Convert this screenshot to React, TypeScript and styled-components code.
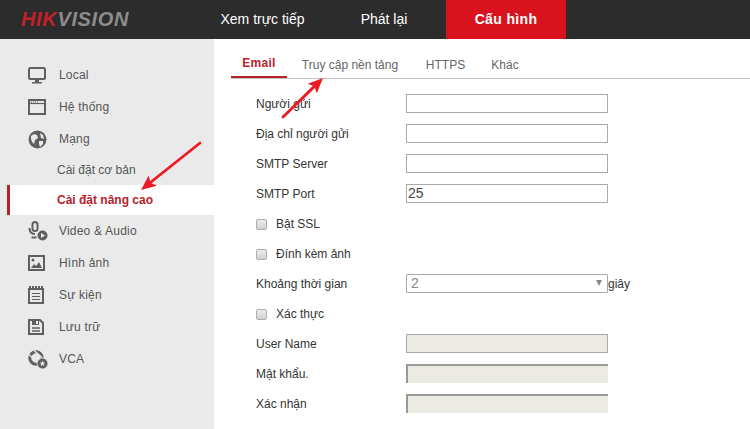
import React from "react";
import styled, { createGlobalStyle } from "styled-components";

const Global = createGlobalStyle`
  html, body { margin: 0; padding: 0; background: #fff; }
  body { font-family: "Liberation Sans", Arial, sans-serif; color: #444; overflow: hidden; }
  * { box-sizing: border-box; }
`;

const Page = styled.div`
  position: relative;
  width: 750px;
  height: 429px;
  overflow: hidden;
  display: flex;
  flex-direction: column;
`;

const Header = styled.header`
  height: 39px;
  background: #2c2c2c;
  display: flex;
  flex: none;
`;

const Logo = styled.div`
  width: 203px;
  padding-left: 21px;
  font: italic bold 20px/38px "Liberation Sans", sans-serif;
  letter-spacing: 0.65px;
  color: #8c8c8c;
  white-space: nowrap;
  span { color: #c4202b; }
`;

const TopNav = styled.nav`
  display: flex;
`;

const TopItem = styled.div<{ $w: number; $active?: boolean }>`
  width: ${(p) => p.$w}px;
  text-align: center;
  font-size: 14px;
  line-height: 39px;
  white-space: nowrap;
  color: #fff;
  font-weight: ${(p) => (p.$active ? 700 : 400)};
  letter-spacing: ${(p) => (p.$active ? "0.35px" : "0")};
  background: ${(p) => (p.$active ? "#d9131e" : "transparent")};
`;

const Body = styled.div`
  flex: 1;
  display: flex;
  min-height: 0;
`;

const Sidebar = styled.aside`
  width: 214px;
  flex: none;
  background: #eaeaea;
  padding: 20px 0 0 7px;
`;

const NavRow = styled.div`
  height: 32px;
  display: flex;
  align-items: center;
  padding-left: 21px;
  font-size: 12px;
  letter-spacing: 0.2px;
  color: #555;
`;

const IconSlot = styled.span`
  width: 31px;
  height: 20px;
  display: flex;
  align-items: center;
  flex: none;
  svg { display: block; color: #5f5f5f; }
`;

const SubRow = styled.div<{ $active?: boolean }>`
  height: 30px;
  display: flex;
  align-items: center;
  padding-left: ${(p) => (p.$active ? 47 : 50)}px;
  font-size: 12px;
  color: ${(p) => (p.$active ? "#b5222c" : "#555")};
  background: ${(p) => (p.$active ? "#fff" : "transparent")};
  border-left: ${(p) => (p.$active ? "3px solid #b5222c" : "none")};
  font-weight: ${(p) => (p.$active ? 700 : 400)};
`;

const Main = styled.main`
  flex: 1;
  padding: 11px 0 0 17px;
`;

const Tabs = styled.div`
  display: flex;
  height: 29px;
  border-bottom: 1px solid #c4c4c4;
`;

const Tab = styled.div<{ $w: number; $active?: boolean }>`
  width: ${(p) => p.$w}px;
  height: 28px;
  text-align: center;
  font-size: 12px;
  line-height: ${(p) => (p.$active ? 27 : 31)}px;
  letter-spacing: ${(p) => (p.$active ? "0.3px" : "0")};
  color: ${(p) => (p.$active ? "#b5222c" : "#666")};
  font-weight: ${(p) => (p.$active ? 700 : 400)};
  border-bottom: ${(p) => (p.$active ? "2px solid #b5222c" : "none")};
`;

const Form = styled.div`
  padding: 9px 0 0 25px;
`;

const Row = styled.div`
  height: 30px;
  display: flex;
  align-items: center;
  font-size: 12px;
  color: #333;
`;

const Label = styled.label`
  width: 150px;
  flex: none;
  padding-top: 2px;
`;

const CheckLabel = styled.label`
  display: flex;
  align-items: center;
  gap: 9px;
  padding-top: 2px;
`;

const Check = styled.span`
  width: 11px;
  height: 11px;
  border: 1px solid #adadad;
  border-radius: 2px;
  background: linear-gradient(#ececec, #d2d2d2);
`;

const Field = styled.div<{ $disabled?: boolean; $inset?: boolean }>`
  width: 202px;
  height: 19px;
  padding-left: 1px;
  font-size: 14px;
  line-height: 17px;
  color: #444;
  border: 1px solid #a9a9a9;
  background: ${(p) => (p.$disabled ? "#ebebe4" : "#fff")};
  ${(p) =>
    p.$inset
      ? "border-width: 2px 0 0 2px; border-color: #9a9a9a; background: #ebebe4;"
      : ""}
`;

const Select = styled.div`
  width: 202px;
  height: 19px;
  display: flex;
  align-items: center;
  justify-content: space-between;
  padding: 0 5px 0 4px;
  font-size: 14px;
  color: #888;
  border: 1px solid #a9a9a9;
  border-radius: 1px;
`;

const Caret = styled.span`
  width: 0;
  height: 0;
  border-left: 3px solid transparent;
  border-right: 3px solid transparent;
  border-top: 6px solid #8a8a8a;
`;

const Unit = styled.span`
  padding-top: 2px;
`;

const ArrowLayer = styled.svg`
  position: absolute;
  left: 0;
  top: 0;
  pointer-events: none;
`;

const Monitor = () => (
  <svg width="18" height="17" viewBox="0 0 18 17"><rect x="1" y="1" width="16" height="11" rx="1.5" fill="none" stroke="currentColor" strokeWidth="2" /><path d="M7 13h4v2h3v1.5H4V15h3z" fill="currentColor" /></svg>
);
const Windowed = () => (
  <svg width="18" height="16" viewBox="0 0 18 16"><rect x="1" y="1" width="16" height="14" fill="none" stroke="currentColor" strokeWidth="2" /><path d="M1 4.5h16" stroke="currentColor" strokeWidth="1.2" /><path d="M3 3h7" stroke="currentColor" strokeWidth="1" strokeDasharray="1 1" /></svg>
);
const Globe = () => (
  <svg width="19" height="19" viewBox="0 0 19 19"><circle cx="9.5" cy="9.5" r="9" fill="currentColor" /><path d="M3 6l3-2 3 1 1 3-3 2-1 4-2-2-1-3zM11 11l4 0 0 3-3 3-1-3zM12 3l3 2 1 4-3-1z" fill="#eaeaea" /></svg>
);
const Mic = () => (
  <svg width="20" height="20" viewBox="0 0 20 20"><rect x="4.5" y="1" width="5" height="9" rx="2.5" fill="none" stroke="currentColor" strokeWidth="2" /><path d="M1.5 7c0 4 2 6 5.5 6M3.5 16.5h5" fill="none" stroke="currentColor" strokeWidth="2" /><circle cx="14.5" cy="14.5" r="5" fill="currentColor" /><path d="M13 12l4 2.5-4 2.5z" fill="#eaeaea" /></svg>
);
const Picture = () => (
  <svg width="17" height="16" viewBox="0 0 17 16"><rect x="1" y="1" width="15" height="14" fill="none" stroke="currentColor" strokeWidth="2" /><circle cx="5" cy="5" r="1.5" fill="currentColor" /><path d="M3 13l3-4 2 2 3-4 3 6z" fill="currentColor" /></svg>
);
const Notes = () => (
  <svg width="16" height="18" viewBox="0 0 16 18"><rect x="1" y="3" width="14" height="14" fill="none" stroke="currentColor" strokeWidth="2" /><path d="M1 1.5h14" stroke="currentColor" strokeWidth="3" strokeDasharray="2 1" /><path d="M4 7.5h8M4 10.5h8M4 13.5h8" stroke="currentColor" strokeWidth="1.2" /></svg>
);
const Floppy = () => (
  <svg width="16" height="16" viewBox="0 0 16 16"><path d="M1 1h11l3 3v11H1z" fill="none" stroke="currentColor" strokeWidth="2" /><path d="M4 1h7v5H4z" fill="currentColor" /><path d="M8 2h2v3H8z" fill="#eaeaea" /><path d="M4 9h8M4 12h8" stroke="currentColor" strokeWidth="1.4" /></svg>
);
const Vca = () => (
  <svg width="20" height="19" viewBox="0 0 20 19"><circle cx="8" cy="8" r="6.2" fill="none" stroke="currentColor" strokeWidth="3" /><path d="M1 4.5l9 8.5M6 0.5l8 7" stroke="#eaeaea" strokeWidth="1.3" /><circle cx="14.5" cy="13.5" r="5.4" fill="currentColor" stroke="#eaeaea" strokeWidth="0.8" /><path d="M14.5 10.8l.8 1.8 1.9.2-1.4 1.3.4 1.9-1.7-1-1.7 1 .4-1.9-1.4-1.3 1.9-.2z" fill="#eaeaea" /></svg>
);

const Arrow = ({ x1, y1, x2, y2 }: { x1: number; y1: number; x2: number; y2: number }) => {
  const a = Math.atan2(y2 - y1, x2 - x1);
  const c = Math.cos(a), s = Math.sin(a);
  const L = 15, W = 6.5;
  const bx = x2 - c * L, by = y2 - s * L;
  const nx = x2 - c * (L - 3), ny = y2 - s * (L - 3);
  return (
    <g>
      <line x1={x1} y1={y1} x2={nx} y2={ny} stroke="#ec1a22" strokeWidth="2.8" strokeLinecap="round" />
      <polygon points={`${x2},${y2} ${bx - s * W},${by + c * W} ${nx},${ny} ${bx + s * W},${by - c * W}`} fill="#ec1a22" />
    </g>
  );
};

export default function App() {
  return (
    <Page>
      <Global />
      <Header>
        <Logo><span>HIK</span>VISION</Logo>
        <TopNav>
          <TopItem $w={119}>Xem trực tiếp</TopItem>
          <TopItem $w={124}>Phát lại</TopItem>
          <TopItem $w={120} $active>Cấu hình</TopItem>
        </TopNav>
      </Header>
      <Body>
        <Sidebar>
          <NavRow><IconSlot><Monitor /></IconSlot>Local</NavRow>
          <NavRow><IconSlot><Windowed /></IconSlot>Hệ thống</NavRow>
          <NavRow><IconSlot><Globe /></IconSlot>Mạng</NavRow>
          <SubRow>Cài đặt cơ bản</SubRow>
          <SubRow $active>Cài đặt nâng cao</SubRow>
          <NavRow><IconSlot><Mic /></IconSlot>Video &amp; Audio</NavRow>
          <NavRow><IconSlot><Picture /></IconSlot>Hình ảnh</NavRow>
          <NavRow><IconSlot><Notes /></IconSlot>Sự kiện</NavRow>
          <NavRow><IconSlot><Floppy /></IconSlot>Lưu trữ</NavRow>
          <NavRow><IconSlot><Vca /></IconSlot>VCA</NavRow>
        </Sidebar>
        <Main>
          <Tabs>
            <Tab $w={56} $active>Email</Tab>
            <Tab $w={126}>Truy cập nền tảng</Tab>
            <Tab $w={65}>HTTPS</Tab>
            <Tab $w={54}>Khác</Tab>
          </Tabs>
          <Form>
            <Row><Label>Người gửi</Label><Field /></Row>
            <Row><Label>Địa chỉ người gửi</Label><Field /></Row>
            <Row><Label>SMTP Server</Label><Field /></Row>
            <Row><Label>SMTP Port</Label><Field>25</Field></Row>
            <Row><CheckLabel><Check />Bật SSL</CheckLabel></Row>
            <Row><CheckLabel><Check />Đính kèm ảnh</CheckLabel></Row>
            <Row><Label>Khoảng thời gian</Label><Select>2<Caret /></Select><Unit>giây</Unit></Row>
            <Row><CheckLabel><Check />Xác thực</CheckLabel></Row>
            <Row><Label>User Name</Label><Field $disabled /></Row>
            <Row><Label>Mật khẩu.</Label><Field $inset /></Row>
            <Row><Label>Xác nhận</Label><Field $inset /></Row>
          </Form>
        </Main>
      </Body>
      <ArrowLayer width="750" height="429" viewBox="0 0 750 429">
        <Arrow x1={200} y1={143} x2={141} y2={190} />
        <Arrow x1={283} y1={117} x2={323} y2={78} />
      </ArrowLayer>
    </Page>
  );
}
